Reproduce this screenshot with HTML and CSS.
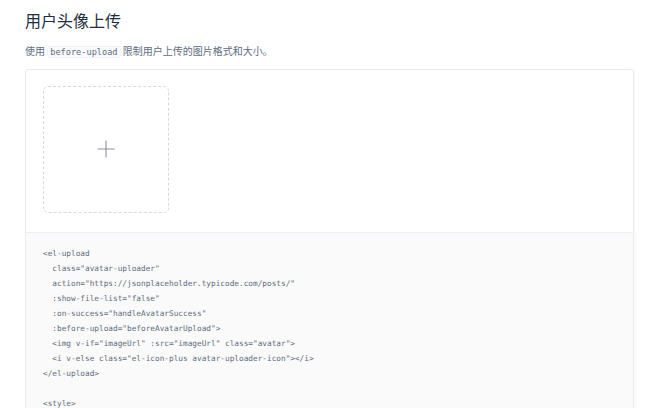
FILE: index.html
```html
<!DOCTYPE html>
<html lang="zh-CN">
<head>
<meta charset="utf-8">
<title>用户头像上传</title>
<link rel="stylesheet" href="styles.css">
</head>
<body>
<div class="page">
  <h3 class="title">用户头像上传</h3>
  <p class="desc">使用 <code class="inline-code">before-upload</code> 限制用户上传的图片格式和大小。</p>
  <div class="demo">
    <div class="demo-source">
      <div class="uploader">
        <svg class="plus" width="18" height="18" viewBox="0 0 18 18"><path d="M9 0.5V17.5M0.5 9H17.5" stroke="#8c939d" stroke-width="1.1" fill="none"/></svg>
      </div>
    </div>
    <div class="demo-code">
<pre class="code">&lt;el-upload
  class="avatar-uploader"
  action="https://jsonplaceholder.typicode.com/posts/"
  :show-file-list="false"
  :on-success="handleAvatarSuccess"
  :before-upload="beforeAvatarUpload"&gt;
  &lt;img v-if="imageUrl" :src="imageUrl" class="avatar"&gt;
  &lt;i v-else class="el-icon-plus avatar-uploader-icon"&gt;&lt;/i&gt;
&lt;/el-upload&gt;

&lt;style&gt;</pre>
    </div>
  </div>
</div>
</body>
</html>
```
FILE: styles.css
```css
html, body {
  margin: 0;
  padding: 0;
  background: #fff;
  overflow: hidden;
}
body {
  font-family: "Noto Sans CJK SC", "Noto Sans", sans-serif;
}
.page {
  padding: 0 26px 0 25px;
}
.title {
  margin: 0;
  padding-top: 9px;
  font-size: 16px;
  line-height: 22px;
  font-weight: 400;
  color: #1f2f3d;
}
.desc {
  margin: 13px 0 0;
  font-size: 10px;
  line-height: 14px;
  color: #5e6d82;
}
.inline-code {
  font-family: "DejaVu Sans Mono", monospace;
  font-size: 8.6px;
  background: #f9fafc;
  border: 1px solid #f0f2f7;
  border-radius: 3px;
  padding: 0 2px;
  color: #5e6d82;
}
.demo {
  margin-top: 10px;
  border: 1px solid #ebebeb;
  border-radius: 3px;
  box-shadow: 2px 0 2px rgba(0,0,0,0.02);
}
.demo-source {
  padding: 16px 17px 19px;
  border-bottom: 1px solid #eaeefb;
}
.uploader {
  width: 124px;
  height: 125px;
  border: 1px dashed #d9d9d9;
  border-radius: 5px;
  display: flex;
  align-items: center;
  justify-content: center;
}
.plus {
  display: block;
  margin-right: 1px;
  margin-bottom: 1px;
}
.demo-code {
  background: #fafafa;
  padding: 13px 17px 0;
  height: 200px;
}
.code {
  margin: 0;
  font-family: "DejaVu Sans Mono", monospace;
  font-size: 7.75px;
  line-height: 15px;
  color: #5e6d82;
}
```
